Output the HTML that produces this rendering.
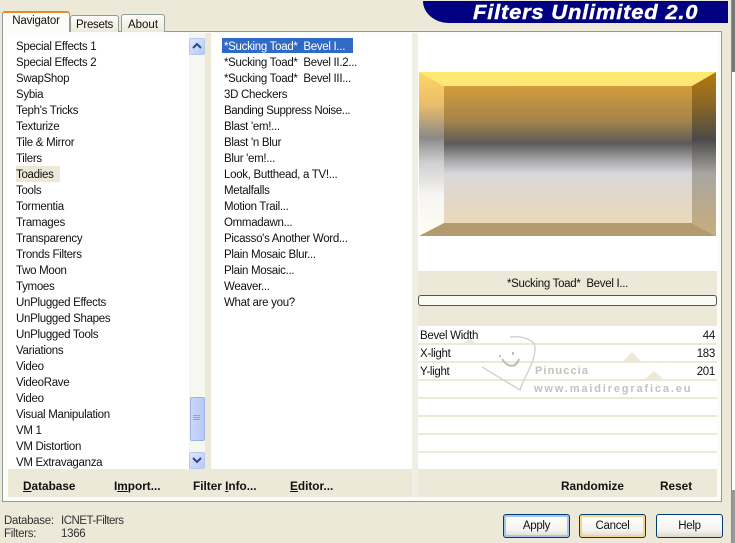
<!DOCTYPE html>
<html><head><meta charset="utf-8"><style>
html,body{margin:0;padding:0}
body{width:735px;height:543px;overflow:hidden;position:relative;background:#ece9d8;font-family:"Liberation Sans",sans-serif;font-size:11.5px;color:#111;letter-spacing:-.3px}
div{position:absolute;box-sizing:border-box}
.t{white-space:pre;line-height:16px;height:16px;margin-top:1px}
.b{font-weight:bold;font-size:11.8px;white-space:pre;line-height:16px;top:478px;letter-spacing:0}
.tab{border:1px solid #919b9c;border-bottom:none;border-radius:3px 3px 0 0;background:linear-gradient(#fdfdfb,#ece9d8);text-align:center;line-height:16px}
.btn{width:67px;height:24px;top:514px;border:1px solid #003c74;border-radius:3px;text-align:center;line-height:23px;background:linear-gradient(#fff,#f4f3ee 70%,#dcd8ca)}
.ln{left:418px;width:299px;height:2px;background:#ece9d8}
.sb{width:16px;height:17px;left:189px;border:1px solid #b5c8ef;border-radius:2px;background:linear-gradient(135deg,#dfe8fd,#b6c9f5)}
</style></head><body>

<div style="left:423px;top:1px;width:305px;height:22px;background:#000080;border-radius:0 0 0 26px/0 0 0 22px"></div>
<div style="left:473px;top:2px;font:italic bold 20px/22px 'Liberation Sans',sans-serif;color:#fff;white-space:pre;letter-spacing:.7px;-webkit-text-stroke:.4px #fff;transform:scaleX(1.1);transform-origin:left center">Filters Unlimited 2.0</div>
<div style="left:731px;top:0;width:1px;height:543px;background:#8f8f8a"></div>
<div style="left:732px;top:0;width:3px;height:72px;background:#777"></div>
<div style="left:732px;top:72px;width:3px;height:418px;background:#fff"></div>
<div style="left:732px;top:490px;width:3px;height:53px;background:#999"></div>

<div style="left:2px;top:31px;width:720px;height:471px;background:#fbfbf8;border:1px solid #919b9c"></div>
<div class="tab" style="left:70px;top:15px;width:49px;height:17px;padding-top:1px">Presets</div>
<div class="tab" style="left:121px;top:14px;width:44px;height:18px;padding-top:2px;letter-spacing:0">About</div>
<div style="left:2px;top:11px;width:68px;height:21px;background:#fbfbf8;border:1px solid #919b9c;border-bottom:none;border-top:2px solid #e68b2c;border-radius:3px 3px 0 0;text-align:center;line-height:16px;letter-spacing:-.2px">Navigator</div>

<div style="left:8px;top:33px;width:197px;height:436px;background:#fff"></div>
<div style="left:189px;top:33px;width:16px;height:436px;background:#f7f7f2"></div>
<div style="left:205px;top:33px;width:6px;height:436px;background:#ece9d8"></div>
<div style="left:211px;top:33px;width:201px;height:436px;background:#fff"></div>
<div style="left:412px;top:33px;width:6px;height:464px;background:#f1efe4"></div>
<div style="left:8px;top:469px;width:404px;height:28px;background:#ece9d8"></div>
<div style="left:418px;top:469px;width:299px;height:28px;background:#ece9d8"></div>
<div style="left:418px;top:33px;width:299px;height:436px;background:#fff"></div>

<div style="left:16px;top:166px;width:44px;height:16px;background:#ece9d8"></div>
<div class="t" style="left:16px;top:38px">Special Effects 1</div>
<div class="t" style="left:16px;top:54px">Special Effects 2</div>
<div class="t" style="left:16px;top:70px">SwapShop</div>
<div class="t" style="left:16px;top:86px">Sybia</div>
<div class="t" style="left:16px;top:102px">Teph's Tricks</div>
<div class="t" style="left:16px;top:118px">Texturize</div>
<div class="t" style="left:16px;top:134px">Tile &amp; Mirror</div>
<div class="t" style="left:16px;top:150px">Tilers</div>
<div class="t" style="left:16px;top:166px">Toadies</div>
<div class="t" style="left:16px;top:182px">Tools</div>
<div class="t" style="left:16px;top:198px">Tormentia</div>
<div class="t" style="left:16px;top:214px">Tramages</div>
<div class="t" style="left:16px;top:230px">Transparency</div>
<div class="t" style="left:16px;top:246px">Tronds Filters</div>
<div class="t" style="left:16px;top:262px">Two Moon</div>
<div class="t" style="left:16px;top:278px">Tymoes</div>
<div class="t" style="left:16px;top:294px">UnPlugged Effects</div>
<div class="t" style="left:16px;top:310px">UnPlugged Shapes</div>
<div class="t" style="left:16px;top:326px">UnPlugged Tools</div>
<div class="t" style="left:16px;top:342px">Variations</div>
<div class="t" style="left:16px;top:358px">Video</div>
<div class="t" style="left:16px;top:374px">VideoRave</div>
<div class="t" style="left:16px;top:390px">Video</div>
<div class="t" style="left:16px;top:406px">Visual Manipulation</div>
<div class="t" style="left:16px;top:422px">VM 1</div>
<div class="t" style="left:16px;top:438px">VM Distortion</div>
<div class="t" style="left:16px;top:454px">VM Extravaganza</div>

<div class="sb" style="top:38px"></div>
<svg style="position:absolute;left:192px;top:42px" width="10" height="8"><path d="M1 6L5 2L9 6" fill="none" stroke="#2c4a86" stroke-width="2"/></svg>
<div style="left:190px;top:397px;width:15px;height:44px;border:1px solid #9db3e6;border-radius:2px;background:linear-gradient(90deg,#c9d6fb,#b9caf7)"></div>
<svg style="position:absolute;left:193px;top:414px" width="8" height="8"><path d="M0 1.5H7M0 3.5H7M0 5.5H7" stroke="#8ea3d6" stroke-width="1"/></svg>
<div class="sb" style="top:452px"></div>
<svg style="position:absolute;left:192px;top:456px" width="10" height="8"><path d="M1 2L5 6L9 2" fill="none" stroke="#2c4a86" stroke-width="2"/></svg>

<div style="left:222px;top:38px;width:131px;height:15px;background:#316ac5"></div>
<div class="t" style="left:224px;top:38px;color:#fff">*Sucking Toad*  Bevel I...</div>
<div class="t" style="left:224px;top:54px">*Sucking Toad*  Bevel II.2...</div>
<div class="t" style="left:224px;top:70px">*Sucking Toad*  Bevel III...</div>
<div class="t" style="left:224px;top:86px">3D Checkers</div>
<div class="t" style="left:224px;top:102px;letter-spacing:-.4px">Banding Suppress Noise...</div>
<div class="t" style="left:224px;top:118px">Blast 'em!...</div>
<div class="t" style="left:224px;top:134px">Blast 'n Blur</div>
<div class="t" style="left:224px;top:150px">Blur 'em!...</div>
<div class="t" style="left:224px;top:166px">Look, Butthead, a TV!...</div>
<div class="t" style="left:224px;top:182px">Metalfalls</div>
<div class="t" style="left:224px;top:198px">Motion Trail...</div>
<div class="t" style="left:224px;top:214px">Ommadawn...</div>
<div class="t" style="left:224px;top:230px">Picasso's Another Word...</div>
<div class="t" style="left:224px;top:246px">Plain Mosaic Blur...</div>
<div class="t" style="left:224px;top:262px">Plain Mosaic...</div>
<div class="t" style="left:224px;top:278px">Weaver...</div>
<div class="t" style="left:224px;top:294px">What are you?</div>

<svg style="position:absolute;left:419px;top:72px" width="297" height="164">
<defs>
<linearGradient id="c" x1="0" y1="0" x2="0" y2="1"><stop offset="0" stop-color="#d49c3a"/><stop offset=".25" stop-color="#a5854a"/><stop offset=".42" stop-color="#5d5b58"/><stop offset=".53" stop-color="#a09fa1"/><stop offset=".64" stop-color="#d9d7da"/><stop offset="1" stop-color="#e9d9b9"/></linearGradient>
<linearGradient id="l" x1="0" y1="0" x2="0" y2="1"><stop offset="0" stop-color="#ffd566"/><stop offset=".2" stop-color="#e9bd6a"/><stop offset=".4" stop-color="#8b8a88"/><stop offset=".55" stop-color="#cfcfd0"/><stop offset=".75" stop-color="#f6f5f2"/><stop offset="1" stop-color="#fffff2"/></linearGradient>
<linearGradient id="r" x1="0" y1="0" x2="0" y2="1"><stop offset="0" stop-color="#b57a0c"/><stop offset=".2" stop-color="#8a6726"/><stop offset=".41" stop-color="#4b4a49"/><stop offset=".62" stop-color="#a9a6a2"/><stop offset="1" stop-color="#c8ad7c"/></linearGradient>
<linearGradient id="tp" x1="0" y1="0" x2="0" y2="1"><stop offset="0" stop-color="#ffe96b"/><stop offset="1" stop-color="#fde67c"/></linearGradient>
</defs>
<rect x="25" y="14" width="248" height="137" fill="url(#c)"/>
<polygon points="0,0 297,0 273,14 25,14" fill="url(#tp)"/>
<polygon points="0,0 25,14 25,151 0,164" fill="url(#l)"/>
<polygon points="297,0 273,14 273,151 297,164" fill="url(#r)"/>
<polygon points="0,164 25,151 273,151 297,164" fill="#b29b6e"/>
</svg>

<div style="left:418px;top:271px;width:299px;height:55px;background:#ece9d8"></div>
<div class="t" style="left:418px;top:275px;width:299px;text-align:center">*Sucking Toad*  Bevel I...</div>
<div style="left:418px;top:295px;width:299px;height:11px;background:#fbfbf6;border:1px solid #555;border-radius:3px"></div>

<div class="ln" style="top:343px"></div>
<div class="ln" style="top:361px"></div>
<div class="ln" style="top:379px"></div>
<div class="ln" style="top:397px"></div>
<div class="ln" style="top:415px"></div>
<div class="ln" style="top:433px"></div>
<div class="ln" style="top:451px"></div>
<svg style="position:absolute;left:418px;top:335px" width="299" height="60">
<polygon points="45,9 52,3 59,9" fill="#ece9d8"/>
<polygon points="205,26 214,17 223,26" fill="#ece9d8"/>
<polygon points="227,44 236,36 245,44" fill="#ece9d8"/>
<path d="M64,32L102,55C106,42 118,26 117,12C116,4 104,1 92,2" fill="none" stroke="#d4d4d0" stroke-width="1.5"/>
<path d="M84,24C90,33 98,33 101,24" fill="none" stroke="#bdbdb8" stroke-width="2"/>
<path d="M82,20v2M95,17v3" stroke="#bdbdb8" stroke-width="2"/>
</svg>
<div class="t" style="left:535px;top:362px;color:#c2c2bd;font-weight:bold;font-size:11px;letter-spacing:1.1px">Pinuccia</div>
<div class="t" style="left:534px;top:380px;color:#c2c2bd;font-weight:bold;font-size:11px;letter-spacing:1.85px">www.maidiregrafica.eu</div>

<div class="t" style="left:420px;top:327px">Bevel Width</div>
<div class="t" style="left:420px;top:345px">X-light</div>
<div class="t" style="left:420px;top:363px">Y-light</div>
<div class="t" style="right:20px;top:327px">44</div>
<div class="t" style="right:20px;top:345px">183</div>
<div class="t" style="right:20px;top:363px">201</div>

<div class="b" style="left:23px"><u>D</u>atabase</div>
<div class="b" style="left:114px">I<u>m</u>port...</div>
<div class="b" style="left:193px">Filter <u>I</u>nfo...</div>
<div class="b" style="left:290px"><u>E</u>ditor...</div>
<div class="b" style="left:561px">Randomize</div>
<div class="b" style="left:660px">Reset</div>

<div class="t" style="left:4px;top:512px;color:#333">Database:</div>
<div class="t" style="left:61px;top:512px;color:#333;letter-spacing:-.5px">ICNET-Filters</div>
<div class="t" style="left:4px;top:525px;color:#333">Filters:</div>
<div class="t" style="left:61px;top:525px;color:#333">1366</div>

<div class="btn" style="left:503px;box-shadow:inset 0 0 0 2px #a9c4ee">Apply</div>
<div class="btn" style="left:579px;box-shadow:inset 0 0 0 2px #f5d48c">Cancel</div>
<div class="btn" style="left:656px">Help</div>
</body></html>
